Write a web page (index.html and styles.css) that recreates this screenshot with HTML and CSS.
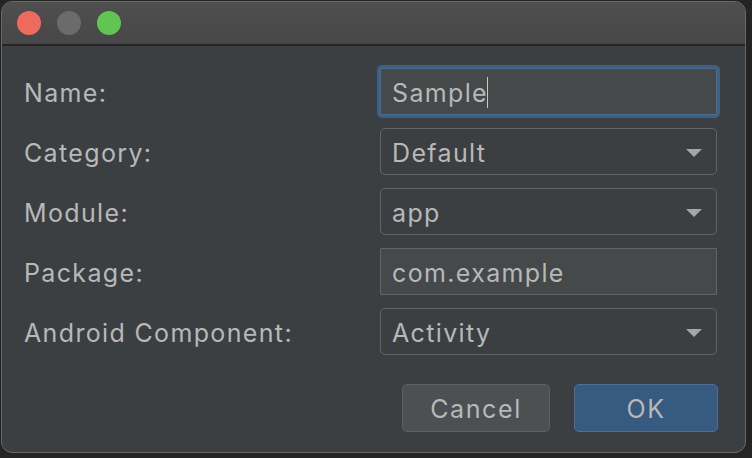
FILE: index.html
```html
<!DOCTYPE html>
<html>
<head>
<meta charset="utf-8">
<link rel="stylesheet" href="styles.css">
</head>
<body>
<div class="window">
  <div class="titlebar">
    <span class="light red"></span>
    <span class="light gray"></span>
    <span class="light green"></span>
  </div>
  <div class="content">
    <div class="form">
      <label class="label">Name:</label>
      <div class="field text focused"><span>Sample</span><span class="caret"></span></div>
      <label class="label">Category:</label>
      <div class="field combo"><span>Default</span><span class="arrow"></span></div>
      <label class="label">Module:</label>
      <div class="field combo"><span>app</span><span class="arrow"></span></div>
      <label class="label">Package:</label>
      <div class="field text"><span>com.example</span></div>
      <label class="label">Android Component:</label>
      <div class="field combo"><span>Activity</span><span class="arrow"></span></div>
    </div>
    <div class="buttons">
      <button class="btn cancel">Cancel</button>
      <button class="btn ok">OK</button>
    </div>
  </div>
</div>
</body>
</html>
```

FILE: styles.css
```css
html, body {
  margin: 0;
  padding: 0;
  background: #242424;
  width: 752px;
  height: 458px;
  overflow: hidden;
}
body {
  font-family: Inter, "Open Sans", sans-serif;
  font-size: 25px;
  color: #b8b8b8;
}
.window {
  margin: 1px 0 0 1px;
  width: 743px;
  height: 450px;
  border: 1px solid #686868;
  border-radius: 11px;
  overflow: hidden;
  background: #3c3f41;
  display: flex;
  flex-direction: column;
}
.titlebar {
  height: 42px;
  flex: none;
  background: linear-gradient(#4f4f4f, #474747);
  border-bottom: 2px solid #262626;
  display: flex;
  align-items: center;
  gap: 16px;
  padding-left: 15px;
}
.light {
  width: 24px;
  height: 24px;
  border-radius: 50%;
  display: block;
}
.red { background: #ed6a5e; }
.gray { background: #6b6b6b; }
.green { background: #61c554; }
.content {
  flex: 1;
  padding: 22px 0 0 22px;
}
.form {
  display: grid;
  grid-template-columns: 356px 337px;
  grid-auto-rows: 47px;
  row-gap: 13px;
  align-items: center;
}
.label {
  letter-spacing: 1.35px;
  color: #b8b8b8;
  padding-top: 2px;
}
.field {
  box-sizing: border-box;
  height: 47px;
  border: 1px solid #646464;
  display: flex;
  align-items: center;
  padding-left: 11px;
  padding-right: 14px;
  padding-top: 2px;
  letter-spacing: 1.35px;
}
.text {
  background: #45494a;
  border-radius: 1px;
}
.combo {
  background: #3c3f41;
  border-radius: 5px;
  justify-content: space-between;
}
.focused {
  border-color: #4b6c8f;
  box-shadow: 0 0 0 3px #3d6185;
  border-radius: 2px;
}
.caret {
  width: 1px;
  height: 31px;
  background: #c8c8c8;
  margin-left: -1px;
}
.arrow {
  width: 0;
  height: 0;
  border-left: 8.5px solid transparent;
  border-right: 8.5px solid transparent;
  border-top: 8px solid #a6a6a6;
}
.buttons {
  display: flex;
  justify-content: flex-end;
  gap: 24px;
  margin-top: 29px;
  width: 694px;
}
.btn {
  box-sizing: border-box;
  height: 48px;
  border-radius: 5px;
  font-family: Inter, "Open Sans", sans-serif;
  font-size: 25px;
  letter-spacing: 1.6px;
  color: #b8b8b8;
  padding: 2px 0 0;
}
.cancel {
  width: 148px;
  background: #4c5052;
  border: 1px solid #5e6163;
}
.ok {
  width: 144px;
  background: #375a81;
  border: 1px solid #4c6f95;
}
```
